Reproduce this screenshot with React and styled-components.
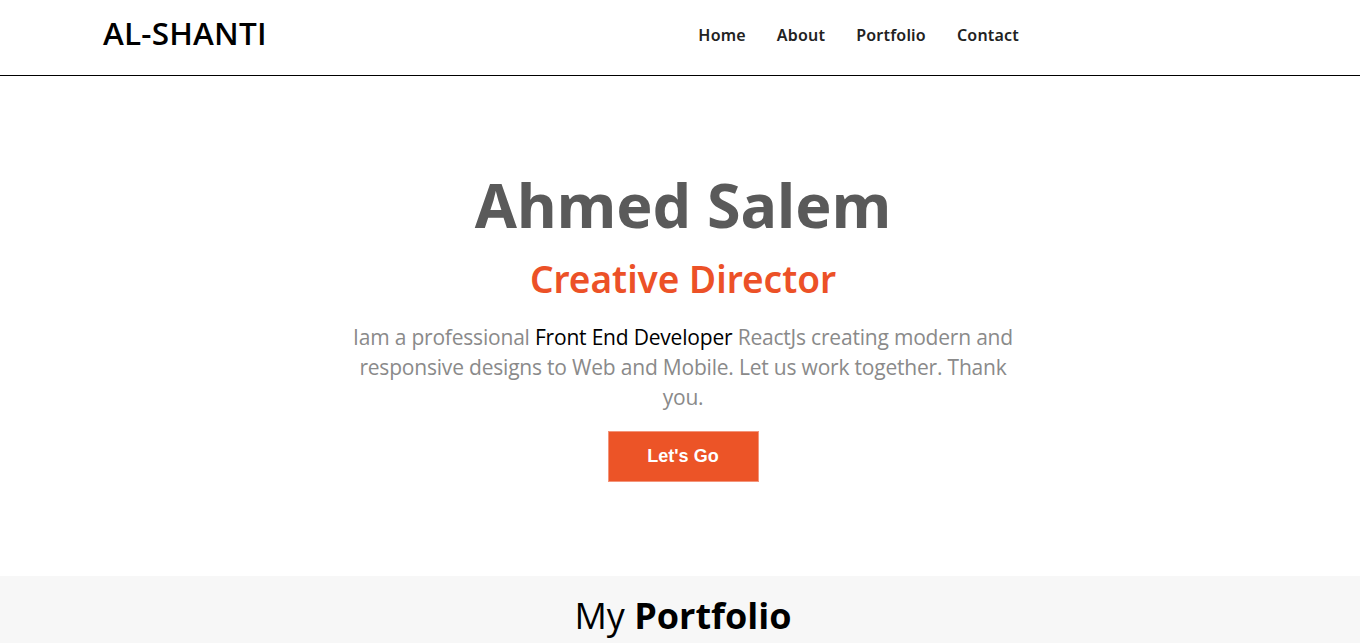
import React from "react";
import styled, { createGlobalStyle } from "styled-components";

const Global = createGlobalStyle`
  html, body { margin: 0; padding: 0; background: #fff; }
  body { font-family: "Noto Sans", sans-serif; }
  * { box-sizing: border-box; }
`;

const Header = styled.header`
  height: 76px;
  border-bottom: 1px solid #000;
  display: flex;
  align-items: center;
  padding: 0 341px 0 103px;
  justify-content: space-between;
`;

const Logo = styled.div`
  font-family: "Open Sans", sans-serif;
  font-weight: 600;
  font-size: 31.5px;
  color: #000;
  letter-spacing: 0.2px;
  margin-top: -10px;
`;

const Nav = styled.nav`
  display: flex;
  gap: 31px;
  margin-top: -6px;
`;

const NavLink = styled.a`
  font-family: "Noto Sans", sans-serif;
  font-size: 16px;
  font-weight: 600;
  color: #222;
  text-decoration: none;
  letter-spacing: 0.2px;
`;

const Hero = styled.section`
  display: flex;
  flex-direction: column;
  align-items: center;
  text-align: center;
  padding: 89px 0 94px 6px;
`;

const Name = styled.h1`
  margin: 0;
  font-family: "Noto Sans", sans-serif;
  font-weight: 700;
  font-size: 61px;
  line-height: 80px;
  color: #5a5a5a;
  letter-spacing: 0;
`;

const Role = styled.h2`
  margin: 9px 0 0;
  font-family: "Noto Sans", sans-serif;
  font-weight: 600;
  font-size: 37px;
  line-height: 50px;
  color: #ec5127;
`;

const Text = styled.p`
  margin: 18px 0 0;
  width: 672px;
  font-family: "Open Sans", sans-serif;
  font-size: 21px;
  line-height: 30px;
  color: #8a8a8a;
  letter-spacing: -0.2px;
`;

const Strong = styled.span`
  color: #000;
`;

const Button = styled.button`
  margin-top: 19px;
  width: 151px;
  height: 51px;
  background: #ec5427;
  border: 1px solid #f3947a;
  color: #fff;
  font-family: "Liberation Sans", Arial, sans-serif;
  font-weight: 700;
  font-size: 18px;
  cursor: pointer;
`;

const Portfolio = styled.section`
  background: #f7f7f7;
  min-height: 80px;
  padding: 16px 0 0 6px;
  text-align: center;
`;

const SectionTitle = styled.h2`
  margin: 0;
  font-family: "Open Sans", sans-serif;
  font-weight: 400;
  font-size: 36px;
  line-height: 48px;
  color: #000;
  b { font-weight: 700; }
`;

export default function App() {
  return (
    <>
      <Global />
      <Header>
        <Logo>AL-SHANTI</Logo>
        <Nav>
          <NavLink href="#">Home</NavLink>
          <NavLink href="#">About</NavLink>
          <NavLink href="#">Portfolio</NavLink>
          <NavLink href="#">Contact</NavLink>
        </Nav>
      </Header>
      <Hero>
        <Name>Ahmed Salem</Name>
        <Role>Creative Director</Role>
        <Text>
          Iam a professional <Strong>Front End Developer</Strong> ReactJs creating modern and responsive designs to Web and Mobile. Let us work together. Thank you.
        </Text>
        <Button>Let's Go</Button>
      </Hero>
      <Portfolio>
        <SectionTitle>
          My <b>Portfolio</b>
        </SectionTitle>
      </Portfolio>
    </>
  );
}
